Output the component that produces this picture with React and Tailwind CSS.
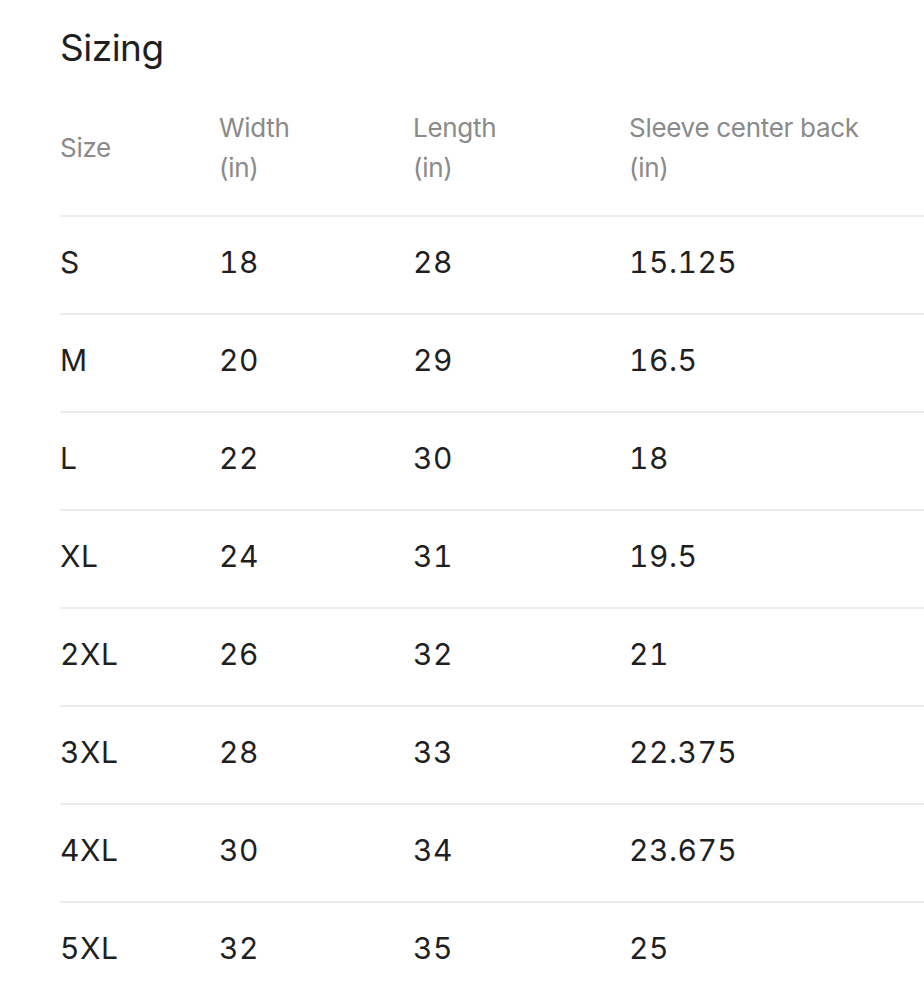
export default function App() {
  const rows = [
    ["S", "18", "28", "15.125"],
    ["M", "20", "29", "16.5"],
    ["L", "22", "30", "18"],
    ["XL", "24", "31", "19.5"],
    ["2XL", "26", "32", "21"],
    ["3XL", "28", "33", "22.375"],
    ["4XL", "30", "34", "23.675"],
    ["5XL", "32", "35", "25"],
  ];
  const cols = "grid grid-cols-[159px_194px_216px_1fr]";
  return (
    <div className="min-h-[990px] bg-white pl-[60px] text-[#1f1f1f] overflow-hidden" style={{ fontFamily: "Inter, 'Liberation Sans', sans-serif" }}>
      <h1 className="pt-[26px] text-[37px] leading-[44px] font-normal tracking-[-0.5px]">Sizing</h1>
      <div className={`${cols} mt-[38px] pb-[27px] text-[26px] leading-[40px] text-[#8a8a8a] border-b-2 border-[#ececec] tracking-[-0.3px]`}>
        <div className="self-center">Size</div>
        <div>Width<br />(in)</div>
        <div>Length<br />(in)</div>
        <div>Sleeve center back<br />(in)</div>
      </div>
      {rows.map((r) => (
        <div key={r[0]} className={`${cols} h-[98px] pb-[6px] items-center text-[30px] leading-[40px] tabular-nums tracking-[0.5px] border-b-2 border-[#ececec]`}>
          {r.map((c, i) => (
            <div key={i}>{c}</div>
          ))}
        </div>
      ))}
    </div>
  );
}
